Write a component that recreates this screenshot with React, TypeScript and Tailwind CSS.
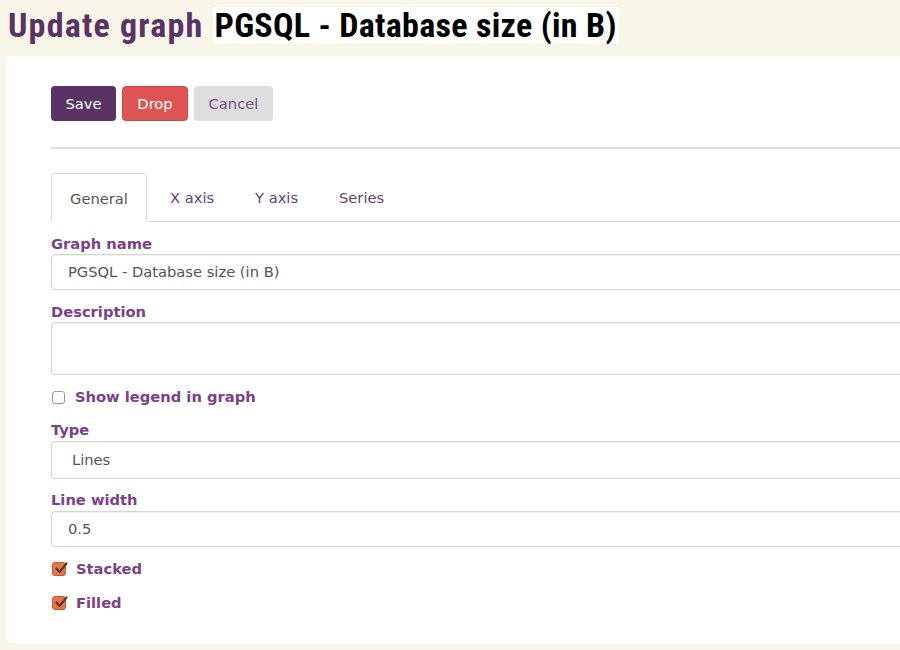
import React from "react";

const labelCls = "block text-[14.7px] font-bold text-[#7b4189] leading-[17px]";
const inputCls =
  "w-full rounded-[4px] border border-[#d4d4d4] bg-white px-[16px] flex items-center text-[14.7px] text-[#555] shadow-[inset_0_1px_1px_rgba(0,0,0,0.06)]";

function Checked() {
  return (
    <span className="relative inline-flex h-[14px] w-[14px] items-center justify-center rounded-[3px] border border-[#c9582f] bg-[#e8744a]">
      <svg width="14" height="14" viewBox="0 0 14 14" className="absolute left-[1px] top-[-2px]">
        <path d="M2.5 7.5 L5.5 11 L12.5 2.5" fill="none" stroke="#5a3a2e" strokeWidth="2.2" strokeLinecap="round" strokeLinejoin="round" />
      </svg>
    </span>
  );
}

const titleFont = { fontFamily: '"Roboto Condensed", "Liberation Sans Narrow", "Liberation Sans", sans-serif' };

export default function App() {
  return (
    <div
      className="h-[650px] w-[900px] overflow-hidden bg-[#f8f5e9]"
      style={{ fontFamily: '"DejaVu Sans", sans-serif' }}
    >
      <div className="flex items-center h-[48px] pl-[8px] pt-[2px]">
        <span className="text-[34px] font-bold text-[#5a3366] tracking-[1.2px]" style={titleFont}>
          Update graph
        </span>
        <span
          className="ml-[9px] bg-white px-[2px] text-[34px] font-bold leading-[36px] text-black tracking-[0.3px]"
          style={titleFont}
        >
          PGSQL - Database size (in B)
        </span>
      </div>
      <div className="ml-[6px] mt-[8px] h-[587px] w-[960px] rounded-[6px] bg-white pl-[45px] pt-[30px]">
        <div className="flex gap-[6px]">
          <button className="h-[35px] w-[65px] rounded-[4px] bg-[#5a3366] pt-[1px] text-[14.7px] text-white">Save</button>
          <button className="h-[35px] w-[66px] rounded-[4px] border border-[#d04540] bg-[#dc5552] pt-[1px] text-[14.7px] text-white">Drop</button>
          <button className="h-[35px] w-[79px] rounded-[4px] bg-[#dedede] pt-[1px] text-[14.7px] text-[#7b4f8c]">Cancel</button>
        </div>
        <div className="mt-[26px] h-[2px] bg-[#dddddd]" />
        <div className="mt-[24px] flex h-[49px] items-end border-b border-[#dddddd] text-[14.7px]">
          <div className="-mb-px flex h-[49px] w-[96px] items-center justify-center rounded-t-[4px] border border-b-white border-[#dddddd] bg-white pt-[3px] text-[#555]">
            General
          </div>
          <div className="flex h-[48px] w-[85px] items-center pl-[23px] pt-[3px] text-[#6b3d7a]">X axis</div>
          <div className="flex h-[48px] w-[84px] items-center pl-[23px] pt-[3px] text-[#6b3d7a]">Y axis</div>
          <div className="flex h-[48px] items-center pl-[23px] pt-[3px] text-[#6b3d7a]">Series</div>
        </div>
        <div className="mt-[13px]">
          <label className={labelCls}>Graph name</label>
          <div className={inputCls + " mt-[2px] h-[36px]"}>PGSQL - Database size (in B)</div>
        </div>
        <div className="mt-[13px]">
          <label className={labelCls}>Description</label>
          <div className="mt-[2px] h-[53px] w-full rounded-[4px] border border-[#d4d4d4] bg-white shadow-[inset_0_1px_1px_rgba(0,0,0,0.06)]" />
        </div>
        <div className="mt-[12px] flex h-[20px] items-center gap-[10px] pl-[1px]">
          <span className="inline-block h-[13px] w-[13px] rounded-[3px] border border-[#999] bg-white" />
          <span className="text-[14.7px] leading-[20px] font-bold text-[#7b4189]">Show legend in graph</span>
        </div>
        <div className="mt-[14px]">
          <label className={labelCls}>Type</label>
          <div className={inputCls + " mt-[3px] h-[38px] pl-[20px]"}>Lines</div>
        </div>
        <div className="mt-[12px]">
          <label className={labelCls}>Line width</label>
          <div className={inputCls + " mt-[3px] h-[36px]"}>0.5</div>
        </div>
        <div className="mt-[12px] flex h-[20px] items-center gap-[10px] pl-[1px]">
          <Checked />
          <span className="text-[14.7px] leading-[20px] font-bold text-[#7b4189]">Stacked</span>
        </div>
        <div className="mt-[14px] flex h-[20px] items-center gap-[10px] pl-[1px]">
          <Checked />
          <span className="text-[14.7px] leading-[20px] font-bold text-[#7b4189]">Filled</span>
        </div>
      </div>
    </div>
  );
}
